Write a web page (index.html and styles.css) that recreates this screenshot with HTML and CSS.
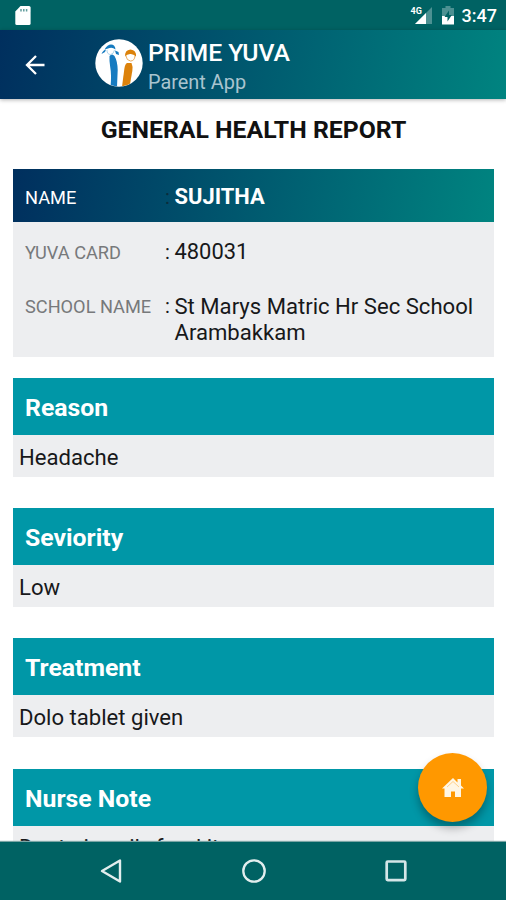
FILE: index.html
```html
<!DOCTYPE html>
<html lang="en">
<head>
<meta charset="utf-8">
<title>General Health Report</title>
<link rel="stylesheet" href="styles.css">
</head>
<body>
<div class="screen">
  <div class="status">
    <svg class="sd" width="16" height="20" viewBox="0 0 16 20"><path d="M5.500 0H14a1.600 1.600 0 0 1 1.600 1.600v15.800A1.600 1.600 0 0 1 14 19H1.900A1.600 1.600 0 0 1 .3 17.400V5.500z" fill="#fff"/><path d="M6 3v2.500M8.800 3v2.500M11.600 3v2.500" stroke="#5f9c9c" stroke-width="1.500"/></svg>
    <div class="signal"><span class="net">4G</span><svg width="20" height="20" viewBox="0 0 20 20"><path d="M1 18 18 1v17z" fill="#4c9192"/><path d="M1 18 12 7V18z" fill="#fff"/></svg></div>
    <svg class="battery" width="12" height="19" viewBox="0 0 12 19"><path d="M3.500 0h5v2H12v8H0V2h3.500z" fill="#4c9192"/><path d="M0 10h12v8.500H0z" fill="#fff"/><path d="M7 4.500 2.500 11H5.500v4.500L9.800 9H7z" fill="#006263"/></svg>
    <span class="time">3:47</span>
  </div>
  <header class="bar">
    <svg class="back" width="22" height="22" viewBox="0 0 22 22"><path d="M19.500 11H2M11 2 2 11l9 9" fill="none" stroke="#fff" stroke-width="2.300"/></svg>
    <svg class="logo" width="48" height="48" viewBox="0 0 48 48"><defs><clipPath id="disc"><circle cx="24" cy="24" r="23.500"/></clipPath></defs><circle cx="24" cy="24" r="23.700" fill="#fff"/><g clip-path="url(#disc)"><path d="M14.500 17q2.500-3 5 0 3 5 3.200 14L22 48h-6.500q1.200-12-.3-20-1-6-.7-11z" fill="#167bc0"/><path d="M27 48 29.300 30q.7-5 2.700-6h4.500q1.500 3 .8 8L34.500 48z" fill="#dc820b"/><path d="M9.500 10.500q3-5 6.500-5 4 0 4.500 5-3-2.500-6-1.500-2 .5-5 1.500z" fill="#167bc0"/><path d="M11 10.500q-3 .5-4.500 4.500l3.500-2z M20 11.500l3.500 1.500.5 3-3-1z" fill="#167bc0"/><path d="M12 11q0 4.500 3.500 4.500 3 0 4-4.500" fill="none" stroke="#9bcbe8" stroke-width=".8"/><path d="M30.200 17.500Q29.500 11 35.500 10.500q6 .5 5.500 7-3-3-6-2.500-3 .2-4.800 2.500z" fill="#dc820b"/><path d="M31 17q.5 4.500 4.500 5 4 0 4.500-5" fill="none" stroke="#e8a34c" stroke-width=".9"/></g></svg>
    <div class="brand"><div class="app">PRIME YUVA</div><div class="sub">Parent App</div></div>
  </header>
  <main class="content">
    <h1>GENERAL HEALTH REPORT</h1>
    <div class="info">
      <div class="row name"><span class="key">NAME</span><span class="sep">:</span><span class="val">SUJITHA</span></div>
      <div class="row card"><span class="key">YUVA CARD</span><span class="sep">:</span><span class="val">480031</span></div>
      <div class="row school"><span class="key">SCHOOL NAME</span><span class="sep">:</span><span class="val">St Marys Matric Hr Sec School Arambakkam</span></div>
    </div>
    <section><h2>Reason</h2><p>Headache</p></section>
    <section><h2>Seviority</h2><p>Low</p></section>
    <section><h2>Treatment</h2><p>Dolo tablet given</p></section>
    <section class="note"><h2>Nurse Note</h2><p>Dont give oily food it</p></section>
  </main>
  <div class="fab"><svg width="22" height="20" viewBox="0 0 22 20"><path d="M11 0 0 10.500h2.500V19H9v-5.500h4V19h6v-8.500h3l-3-3V1h-3.500v3.500z" fill="#fff6e4"/><path d="M5 9 11 3.500 17 9" fill="none" stroke="#ffd08a" stroke-width="1"/></svg></div>
  <nav class="nav">
    <svg width="24" height="26" viewBox="0 0 24 26"><path d="M21 2.500v21L3 13z" fill="none" stroke="#e2eeee" stroke-width="2.400" stroke-linejoin="round"/></svg>
    <svg width="24" height="26" viewBox="0 0 24 26"><circle cx="12" cy="13" r="10.700" fill="none" stroke="#e2eeee" stroke-width="2.300"/></svg>
    <svg width="24" height="26" viewBox="0 0 24 26"><rect x="2.700" y="3.500" width="18.600" height="18.600" rx="1" fill="none" stroke="#d4e6e8" stroke-width="2.700"/></svg>
  </nav>
</div>
</body>
</html>
```
FILE: styles.css
```css
* { box-sizing: border-box; margin: 0; padding: 0; }
body { background: #fff; font-family: Roboto, sans-serif; color: #17181a; }
svg { display: block; flex: none; }
.screen { position: relative; display: flex; flex-direction: column; width: 506px; height: 900px; overflow: hidden; }
.status { flex: none; height: 30px; display: flex; align-items: flex-start; padding: 6px 9px 0 15px; background: #006263; color: #fff; }
.signal { position: relative; margin-left: auto; }
.net { position: absolute; left: -3px; top: 1px; font-size: 9px; line-height: 9px; font-weight: 700; }
.battery { margin-left: 8px; }
.time { margin-left: 8px; font-size: 18px; line-height: 20px; font-weight: 500; }
.bar { position: relative; flex: none; height: 69px; display: flex; align-items: center; padding-left: 25px; color: #fff; background: linear-gradient(100deg, #002f5e, #008480); box-shadow: 0 1px 4px rgba(0, 0, 0, .3); }
.logo { margin-left: 48px; margin-top: -3px; }
.brand { margin-left: 5px; margin-top: 6px; }
.app { font-size: 24.800px; line-height: 30px; font-weight: 500; white-space: nowrap; }
.sub { font-size: 19.900px; line-height: 30px; color: #a9c4cf; }
.content { flex: 1; min-height: 0; overflow: hidden; padding: 0 12px 0 13px; }
h1 { height: 70px; padding-top: 15px; text-align: center; font-size: 24.800px; line-height: 31px; font-weight: 700; color: #111; }
.info { height: 188px; background: #edeef0; margin-bottom: 20.700px; }
.row { display: flex; padding-left: 12px; line-height: 26px; font-size: 22.100px; }
.key { width: 140px; flex: none; padding-top: 1px; font-size: 18.200px; color: #77797b; }
.sep { width: 9.500px; flex: none; font-size: 20px; }
.name { height: 53px; padding-top: 15px; background: linear-gradient(100deg, #002f5e, #008480); }
.name .key { color: #fff; }
.name .sep { color: #0b2c3b; }
.name .val { font-size: 21.900px; font-weight: 700; color: #fff; }
.card { padding-top: 17px; height: 54px; }
.card .val { font-size: 21.900px; }
.school { padding-top: 17px; }
section { height: 99px; margin-bottom: 31.300px; background: #edeef0; }
h2 { height: 57px; padding: 14px 12px 0; font-size: 24.800px; line-height: 32px; font-weight: 700; color: #fff; background: #0097a7; }
p { padding: 8px 6px 0; font-size: 22.100px; line-height: 29px; }
.note p { padding-top: 7px; }
.fab { position: absolute; left: 418px; top: 753px; width: 69px; height: 69px; border-radius: 50%; background: #ff9800; display: flex; align-items: center; justify-content: center; box-shadow: 0 6px 9px rgba(0, 0, 0, .3); }
.nav { position: relative; flex: none; height: 58px; background: #006263; display: flex; justify-content: space-between; align-items: center; padding: 0 98px 0 99px; box-shadow: 0 -1px 1px #7aa5a5; }
```
